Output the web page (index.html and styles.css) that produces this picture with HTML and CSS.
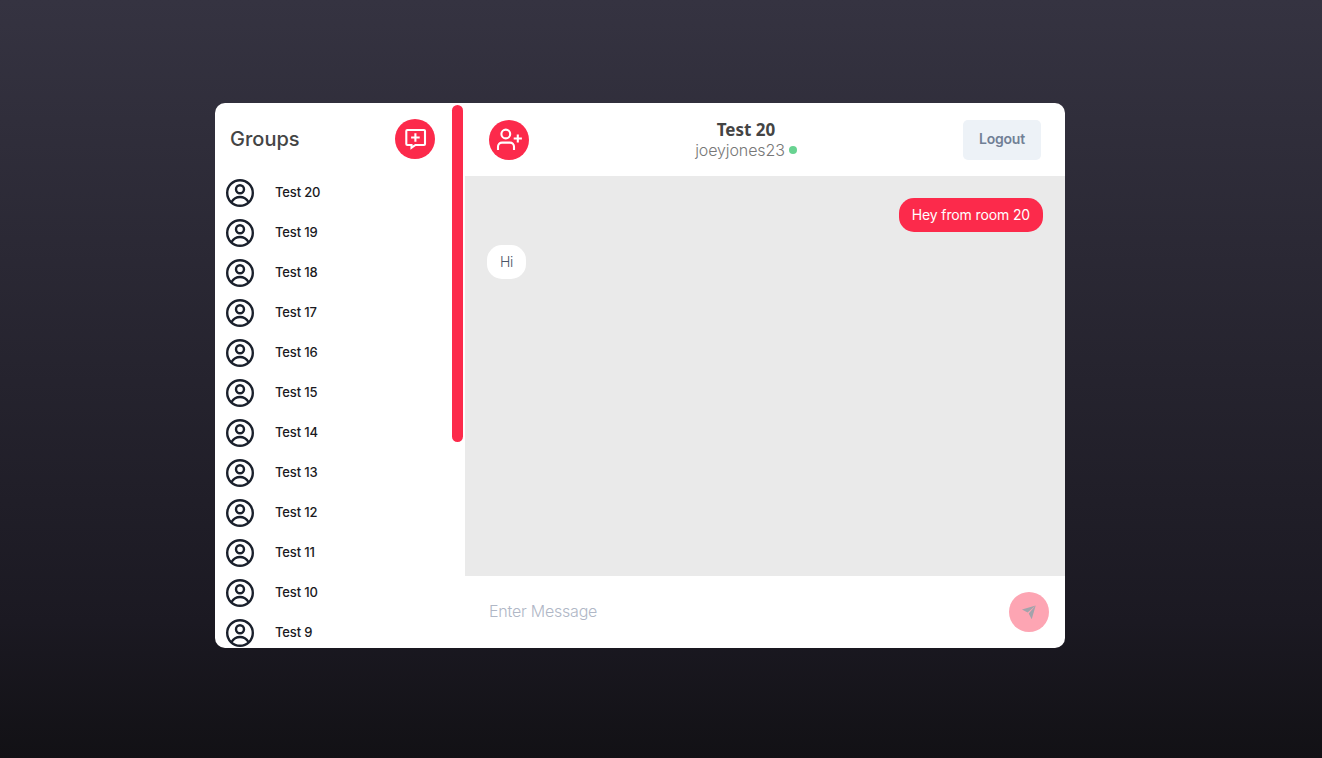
FILE: index.html
```html
<!DOCTYPE html>
<html lang="en">
<head>
<meta charset="utf-8">
<title>Chat</title>
<link rel="stylesheet" href="styles.css">
</head>
<body>
<main class="chat">
  <aside class="sidebar">
    <header class="sidebar-head">
      <h1 class="groups-title">Groups</h1>
      <button class="round" aria-label="New group">
        <svg width="40" height="40" viewBox="0 0 40 40" fill="none" stroke="#fff" stroke-width="2.1"><path d="M12.3 11H29a1 1 0 0 1 1 1V25a1 1 0 0 1-1 1H20.5L16.5 28.7V26H12.3a1 1 0 0 1-1-1V12a1 1 0 0 1 1-1ZM20.4 14.2v8.6M16.1 18.5h8.6"/></svg>
      </button>
    </header>
    <ul class="groups" id="groups"></ul>
    <div class="scroll-thumb"></div>
  </aside>
  <section class="room">
    <header class="room-head">
      <button class="round" aria-label="Add user">
        <svg width="40" height="40" viewBox="0 0 40 40" fill="none" stroke="#fff" stroke-width="2.1"><circle cx="16.8" cy="14" r="4.4"/><path d="M9 30v-3.4a4 4 0 0 1 4-4h8a4 4 0 0 1 4 4V30M28.8 14.4v8.2M24.7 18.5h8.2"/></svg>
      </button>
      <div class="room-info">
        <h2 class="room-name">Test 20</h2>
        <div class="user"><span class="user-name">joeyjones23</span><i class="online"></i></div>
      </div>
      <button class="logout">Logout</button>
    </header>
    <div class="messages">
      <div class="message mine">Hey from room 20</div>
      <div class="message">Hi</div>
    </div>
    <footer class="composer">
      <span class="placeholder">Enter Message</span>
      <button class="round send" aria-label="Send">
        <svg width="40" height="40" viewBox="0 0 40 40"><path fill="#a2a3ab" d="M13 17.4 26.7 13.4 18.6 20.5ZM26.7 13.4 22.7 27.2 19.7 21.5Z"/></svg>
      </button>
    </footer>
  </section>
</main>
<script src="groups.js"></script>
</body>
</html>
```
FILE: styles.css
```css
* { box-sizing: border-box; }
body {
  margin: 0;
  height: 758px;
  padding: 103px 0 0 215px;
  overflow: hidden;
  background: linear-gradient(#353341, #1b1922 82%, #121115);
  font-family: "Inter", "Noto Sans", sans-serif;
}
h1, h2, ul { margin: 0; padding: 0; }
button { border: 0; padding: 0; font-family: inherit; }
.chat {
  display: flex;
  width: 850px;
  height: 545px;
  border-radius: 10px;
  overflow: hidden;
  background: #fff;
}
.sidebar { position: relative; width: 250px; overflow: hidden; }
.sidebar-head {
  display: flex;
  align-items: center;
  justify-content: space-between;
  height: 70px;
  padding: 2px 30px 0 15px;
}
.groups-title { font-size: 20px; line-height: 30px; font-weight: 500; letter-spacing: 0; color: #444; }
.round { display: block; width: 40px; height: 40px; border-radius: 50%; background: #fc2a4b; }
.round svg { display: block; }
.groups { list-style: none; }
.group { display: flex; align-items: center; gap: 20px; height: 40px; padding-left: 10px; }
.group svg { display: block; flex: none; }
.group-name { font-size: 13px; font-weight: 500; letter-spacing: -0.15px; color: #1a1a22; margin-top: -3px; }
.scroll-thumb {
  position: absolute;
  top: 2px;
  right: 2px;
  width: 11px;
  height: 337px;
  border-radius: 6px;
  background: #fc2a4b;
}
.room { display: flex; flex-direction: column; width: 600px; }
.room-head {
  display: flex;
  align-items: center;
  justify-content: space-between;
  height: 73px;
  padding: 1px 24px 0;
}
.room-info { text-align: center; padding-bottom: 2px; }
.room-name { font: 700 17px/22px "Noto Sans", sans-serif; color: #444; }
.user { display: flex; align-items: center; gap: 4px; height: 20px; margin-top: -1px; }
.user-name { font-size: 16px; font-weight: 300; letter-spacing: -0.1px; color: #777; }
.online { width: 8px; height: 8px; border-radius: 50%; background: #68d391; }
.logout {
  width: 78px;
  height: 40px;
  padding-bottom: 3px;
  border-radius: 5px;
  background: #edf2f7;
  color: #718096;
  font-size: 14px;
  font-weight: 600;
  letter-spacing: -0.2px;
}
.messages {
  display: flex;
  flex-direction: column;
  align-items: flex-start;
  gap: 13px;
  height: 400px;
  padding: 22px;
  background: #eaeaea;
}
.message {
  height: 34px;
  padding: 0 13px;
  border-radius: 15px;
  background: #fff;
  color: #4a5568;
  font-size: 14px;
  font-weight: 300;
  letter-spacing: -0.3px;
  line-height: 33px;
}
.mine { align-self: flex-end; background: #fc2a4b; color: #fff; font-weight: 400; letter-spacing: -0.13px; line-height: 34px; }
.composer {
  display: flex;
  align-items: center;
  justify-content: space-between;
  height: 72px;
  padding: 0 16px 0 24px;
}
.placeholder { font-size: 16px; font-weight: 300; letter-spacing: -0.22px; color: #b0b7c6; margin-top: -2px; }
.send { background: #fda5b3; }
```
FILE: groups.js
```js
const list = document.getElementById("groups");
for (let n = 20; n >= 9; n--) {
  const item = document.createElement("li");
  item.className = "group";
  item.innerHTML = `<svg width="30" height="30" viewBox="0 0 30 30" fill="none" stroke="#1a202c" stroke-width="2.4"><circle cx="15" cy="15" r="12.8"/><circle cx="15" cy="11.2" r="4"/><path d="M6.5 24c2-3.3 5-5 8.5-5s6.5 1.7 8.5 5"/></svg><span class="group-name">Test ${n}</span>`;
  list.appendChild(item);
}
```
